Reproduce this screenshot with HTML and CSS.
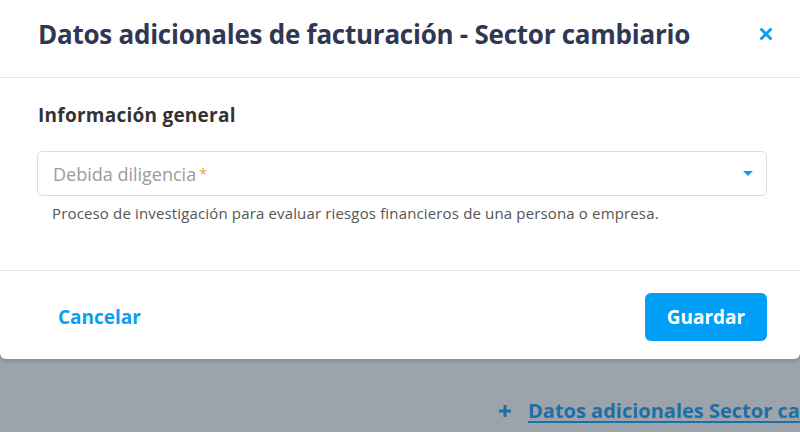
FILE: index.html
```html
<!DOCTYPE html>
<html>

<head>
    <title>Datos adicionales de facturación</title>
    <link rel="stylesheet" href="styles.css">
</head>

<body>
    <div class="modal">
        <div class="modal-header">
            <h1 class="modal-title">Datos adicionales de facturación - Sector cambiario</h1>
            <button class="close-button" aria-label="Cerrar">
                <svg width="14" height="14" viewBox="0 0 14 14">
                    <path d="M2.5 2.5 L11.5 11.5 M11.5 2.5 L2.5 11.5" stroke="#0a9ff0" stroke-width="3" stroke-linecap="round" />
                </svg>
            </button>
        </div>

        <div class="modal-body">
            <h2 class="section-title">Información general</h2>
            <div class="select-box">
                <span class="placeholder">Debida diligencia<span class="required">*</span></span>
                <span class="select-arrow"></span>
            </div>
            <p class="helper-text">Proceso de investigación para evaluar riesgos financieros de una persona o empresa.</p>
        </div>

        <div class="modal-footer">
            <button class="cancel-button">Cancelar</button>
            <button class="save-button">Guardar</button>
        </div>
    </div>

    <div class="page-below">
        <a class="add-link" href="#">
            <svg class="plus" width="14" height="14" viewBox="0 0 14 14">
                <path d="M7 1 V13 M1 7 H13" stroke="#1d6fa8" stroke-width="3" />
            </svg>
            <span class="link-text">Datos adicionales Sector cambiario</span>
        </a>
    </div>
</body>

</html>
```

FILE: styles.css
```css
body {
    margin: 0;
    background-color: #9ca3ab;
    font-family: "Open Sans", Lato, sans-serif;
    overflow: hidden;
}

.modal {
    background-color: white;
    border-radius: 0 0 6px 6px;
    box-shadow: 0 2px 4px rgba(0, 0, 0, 0.15);
    height: 359px;
    display: flex;
    flex-direction: column;
}

.modal-header {
    height: 78px;
    box-sizing: border-box;
    border-bottom: 1px solid #e4e5ea;
    display: flex;
    align-items: center;
    justify-content: space-between;
    padding: 0 27px 10px 38px;
}

.modal-title {
    margin: 0;
    font-size: 26px;
    font-weight: 700;
    color: #2f3753;
    letter-spacing: -0.25px;
}

.close-button {
    background: none;
    border: none;
    padding: 0;
    width: 14px;
    height: 14px;
    display: flex;
    align-items: center;
    justify-content: center;
    cursor: pointer;
}

.modal-body {
    height: 193px;
    box-sizing: border-box;
    border-bottom: 1px solid #e4e5ea;
    padding: 23px 33px 0 37px;
}

.section-title {
    margin: 0 0 22px 1px;
    font-size: 19px;
    font-weight: 700;
    color: #333333;
    line-height: 28px;
    letter-spacing: 0.25px;
}

.select-box {
    height: 45px;
    box-sizing: border-box;
    border: 1px solid #dcdcdc;
    border-radius: 5px;
    display: flex;
    align-items: center;
    justify-content: space-between;
    padding: 0 13px 0 15px;
}

.placeholder {
    font-size: 18px;
    color: #9b9b9b;
}

.required {
    color: #f29b33;
    font-size: 14px;
    margin-left: 3px;
    vertical-align: 2px;
}

.select-arrow {
    width: 0;
    height: 0;
    border-left: 5px solid transparent;
    border-right: 5px solid transparent;
    border-top: 5px solid #0a9ff0;
}

.helper-text {
    margin: 7px 0 0 15px;
    font-size: 15px;
    letter-spacing: 0.15px;
    color: #555555;
}

.modal-footer {
    flex: 1;
    display: flex;
    align-items: center;
    justify-content: space-between;
    padding: 4px 33px 0 58px;
}

.cancel-button {
    background: none;
    border: none;
    padding: 0;
    font-family: inherit;
    font-size: 19px;
    font-weight: 700;
    color: #0a9ff0;
    cursor: pointer;
}

.save-button {
    background-color: #009ff5;
    border: none;
    border-radius: 6px;
    width: 122px;
    height: 48px;
    font-family: inherit;
    font-size: 19px;
    font-weight: 700;
    color: white;
    cursor: pointer;
}

.page-below {
    padding: 38px 0 0 497px;
    white-space: nowrap;
}

.add-link {
    display: flex;
    align-items: center;
    color: #1d6fa8;
    font-size: 20px;
    font-weight: 700;
    text-decoration: none;
}

.plus {
    flex: none;
    margin: 1px 16px 0 1px;
}

.link-text {
    text-decoration: underline;
    text-underline-offset: 3px;
    text-decoration-thickness: 2px;
}
```
